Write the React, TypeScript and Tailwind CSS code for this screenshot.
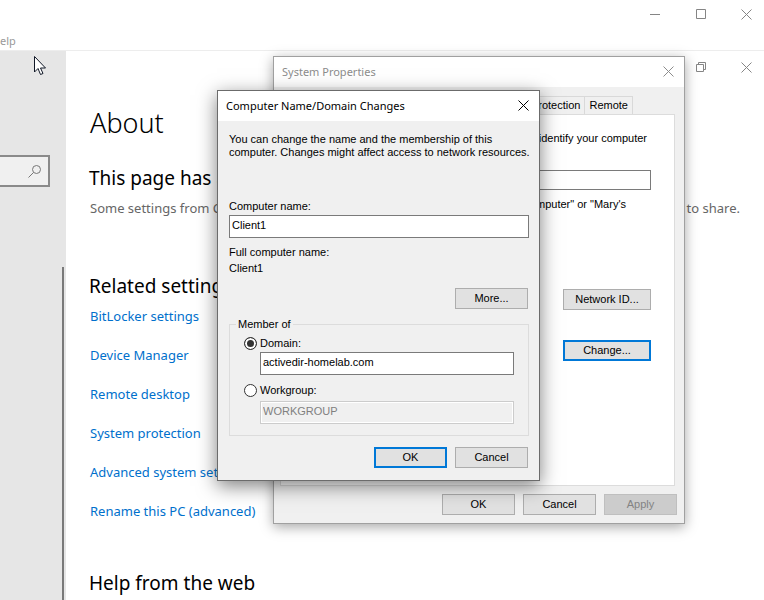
import type { ReactNode } from "react";

const dialogFont = "font-['Liberation_Sans',Arial,sans-serif] text-[11px] leading-[13px] text-black";
const pageFont = "font-['Noto_Sans','Segoe_UI',sans-serif]";

function CloseIcon() {
  return (
    <svg width="11" height="11" viewBox="0 0 11 11" fill="none" stroke="currentColor" aria-hidden="true">
      <path d="M.5 .5l10 10M10.5 .5l-10 10" />
    </svg>
  );
}

function WindowButton({ label, children }: { label: string; children: ReactNode }) {
  return (
    <button type="button" aria-label={label} className="flex w-[11px] items-center justify-center text-[#858585]">
      {children}
    </button>
  );
}

function PushButton({
  children,
  primary = false,
  disabled = false,
  wide = false,
}: {
  children: ReactNode;
  primary?: boolean;
  disabled?: boolean;
  wide?: boolean;
}) {
  const tone = disabled
    ? "border border-[#bfbfbf] bg-[#cccccc] text-[#838383]"
    : primary
      ? "border-2 border-[#0078d7] bg-[#e1e1e1]"
      : "border border-[#adadad] bg-[#e1e1e1]";
  return (
    <button
      type="button"
      disabled={disabled}
      className={`flex h-[21px] items-center justify-center ${wide ? "w-[88px]" : "w-[73px]"} ${tone}`}
    >
      {children}
    </button>
  );
}

const related = [
  "BitLocker settings",
  "Device Manager",
  "Remote desktop",
  "System protection",
  "Advanced system settings",
  "Rename this PC (advanced)",
];

const sectionHeading = "-ml-px text-[19px] leading-7";

function SettingsPage() {
  return (
    <main className="min-w-0 flex-1 bg-white">
      <div className="flex h-8 justify-end gap-[35px] pr-3">
        <WindowButton label="Restore">
          <svg width="10" height="10" viewBox="0 0 10 10" fill="none" stroke="currentColor" aria-hidden="true">
            <path d="M.5 2.5h7v7h-7zM2.5 2.5v-2h7v7h-2" />
          </svg>
        </WindowButton>
        <WindowButton label="Close">
          <CloseIcon />
        </WindowButton>
      </div>
      <div className="pt-5 pr-6 pl-6">
        <h1 className="text-[27px] leading-10 font-light">About</h1>
        <h2 className={`mt-[21px] ${sectionHeading}`}>This page has a few</h2>
        <p className="mt-[6px] flex justify-between text-[13px] leading-5 whitespace-nowrap text-[#666]">
          <span>Some settings from Control Panel</span>
          <span>to share.</span>
        </p>
        <h2 className={`mt-[54px] ${sectionHeading}`}>Related settings</h2>
        <ul className="mt-[6px] flex flex-col gap-[19px]">
          {related.map((name) => (
            <li key={name} className="h-5 text-[13px] leading-5 whitespace-nowrap">
              <a href="#" className="text-[#0070cc]">
                {name}
              </a>
            </li>
          ))}
        </ul>
        <h2 className={`mt-12 ${sectionHeading}`}>Help from the web</h2>
      </div>
    </main>
  );
}

function SystemProperties() {
  return (
    <section
      aria-label="System Properties"
      className={`absolute top-14 left-[273px] flex h-[468px] w-[412px] flex-col border border-[#a0a0a0] bg-[#f0f0f0] shadow-[0_3px_12px_rgba(0,0,0,0.35)] ${dialogFont}`}
    >
      <header className={`flex h-[30px] items-center justify-between bg-white pr-[10px] pb-[2px] pl-2 text-[#8c8c8c] ${pageFont}`}>
        <h2>System Properties</h2>
        <button type="button" aria-label="Close">
          <CloseIcon />
        </button>
      </header>
      <div className="flex flex-1 flex-col px-[6px] pt-[9px] pb-2">
        <div role="tablist" className="flex justify-end pr-[45px] whitespace-nowrap">
          <button type="button" role="tab" className="h-[18px] border border-r-0 border-b-0 border-[#d9d9d9] px-1">
            System Protection
          </button>
          <button type="button" role="tab" className="h-[18px] border border-b-0 border-[#d9d9d9] px-1">
            Remote
          </button>
        </div>
        <div className="mr-[3px] flex-1 border border-[#dcdcdc] bg-white pt-[17px] pr-[23px]">
          <p className="ml-auto w-fit pr-1 whitespace-nowrap">
            Windows uses the following information to identify your computer
            <br />
            on the network.
          </p>
          <label className="mt-[12px] flex items-center justify-end gap-2">
            Computer description:
            <input type="text" className="h-5 w-[230px] border border-[#7a7a7a] bg-white px-1" />
          </label>
          <p className="mt-2 ml-auto w-fit pr-[25px] whitespace-nowrap">
            For example: "Kitchen Computer" or "Mary's
            <br />
            Computer".
          </p>
          <div className="mt-[65px] flex flex-col items-end gap-[30px]">
            <PushButton wide>Network ID...</PushButton>
            <PushButton wide primary>
              Change...
            </PushButton>
          </div>
        </div>
        <div className="mt-2 flex justify-end gap-2 pr-px">
          <PushButton>OK</PushButton>
          <PushButton>Cancel</PushButton>
          <PushButton disabled>Apply</PushButton>
        </div>
      </div>
    </section>
  );
}

const radioStyle =
  "size-[13px] appearance-none rounded-full border border-[#333] bg-white checked:bg-[#333] checked:shadow-[inset_0_0_0_2px_white]";

function NameChanges() {
  return (
    <section
      aria-label="Computer Name/Domain Changes"
      className={`absolute top-[90px] left-[217px] w-[323px] border border-[#6b6b6b] bg-[#f0f0f0] shadow-[0_5px_18px_rgba(0,0,0,0.5)] ${dialogFont}`}
    >
      <header className={`flex h-[30px] items-center justify-between bg-white pr-[10px] pb-[2px] pl-2 ${pageFont}`}>
        <h2>Computer Name/Domain Changes</h2>
        <button type="button" aria-label="Close">
          <CloseIcon />
        </button>
      </header>
      <form className="px-[11px] pt-3 pb-3">
        <p className="whitespace-nowrap">
          You can change the name and the membership of this
          <br />
          computer. Changes might affect access to network resources.
        </p>
        <label htmlFor="computer-name" className="mt-[41px] block">
          Computer name:
        </label>
        <input
          id="computer-name"
          type="text"
          defaultValue="Client1"
          className="mt-[2px] block h-[23px] w-[300px] border border-[#7a7a7a] bg-white px-[2px] pb-[3px]"
        />
        <p className="mt-2">Full computer name:</p>
        <p className="mt-[3px]">Client1</p>
        <div className="mt-[13px] flex justify-end">
          <PushButton>More...</PushButton>
        </div>
        <fieldset className="mt-[9px] w-[300px] border border-[#dcdcdc] pr-[14px] pb-[11px] pl-[14px]">
          <legend className="-ml-2 px-[2px]">Member of</legend>
          <label className="mt-[6px] flex items-center gap-[3px]">
            <input type="radio" name="member" defaultChecked className={radioStyle} />
            Domain:
          </label>
          <input
            type="text"
            aria-label="Domain name"
            defaultValue="activedir-homelab.com"
            className="mt-[2px] ml-4 block h-[23px] w-[254px] border border-[#7a7a7a] bg-white px-[2px] pb-[3px]"
          />
          <label className="mt-[9px] flex items-center gap-[3px]">
            <input type="radio" name="member" className={radioStyle} />
            Workgroup:
          </label>
          <input
            type="text"
            aria-label="Workgroup name"
            defaultValue="WORKGROUP"
            disabled
            className="mt-1 ml-4 block h-[23px] w-[254px] border border-[#ccc] bg-[#f0f0f0] px-[2px] pb-[3px] text-[#808080] shadow-[inset_0_0_0_1px_white]"
          />
        </fieldset>
        <div className="mt-[11px] flex justify-end gap-2">
          <PushButton primary>OK</PushButton>
          <PushButton>Cancel</PushButton>
        </div>
      </form>
    </section>
  );
}

export default function App() {
  return (
    <div className={`relative flex h-screen flex-col overflow-hidden bg-white text-black ${pageFont}`}>
      <header className="flex h-[51px] flex-col justify-between border-b border-[#ededed]">
        <div className="flex h-7 justify-end gap-[35px] pr-3">
          <WindowButton label="Minimize">
            <svg width="10" height="10" viewBox="0 0 10 10" stroke="currentColor" aria-hidden="true">
              <path d="M0 5.5h10" />
            </svg>
          </WindowButton>
          <WindowButton label="Maximize">
            <svg width="10" height="10" viewBox="0 0 10 10" fill="none" stroke="currentColor" aria-hidden="true">
              <path d="M.5 .5h9v9h-9z" />
            </svg>
          </WindowButton>
          <WindowButton label="Close">
            <CloseIcon />
          </WindowButton>
        </div>
        <button type="button" className="self-start text-[11px] leading-[18px] text-[#999]">
          elp
        </button>
      </header>
      <div className="flex min-h-0 flex-1">
        <aside className="flex w-[66px] shrink-0 flex-col bg-[#e6e6e6] pt-[104px]">
          <div className="mr-4 flex h-8 items-center border-2 border-l-0 border-[#8a8a8a] bg-[#f0f0f0] pr-[7px]">
            <input type="search" aria-label="Find a setting" className="min-w-0 flex-1 bg-transparent" />
            <svg width="13" height="13" viewBox="0 0 13 13" fill="none" stroke="#777" aria-hidden="true">
              <circle cx="8.5" cy="4.5" r="4" />
              <path d="M5.5 7.5L.5 12.5" />
            </svg>
          </div>
          <div className="mt-20 mr-[2px] w-[2px] flex-1 self-end bg-[#7a7a7a]" />
        </aside>
        <SettingsPage />
      </div>
      <SystemProperties />
      <NameChanges />
      <svg className="absolute top-14 left-[34px]" width="13" height="20" viewBox="0 0 13 20" aria-hidden="true">
        <path
          d="M.5 .5v15.5l3.5-3.5 2.5 6 2.5-1-2.5-5.5h5z"
          fill="white"
          stroke="#111827"
          strokeLinejoin="round"
        />
      </svg>
    </div>
  );
}
